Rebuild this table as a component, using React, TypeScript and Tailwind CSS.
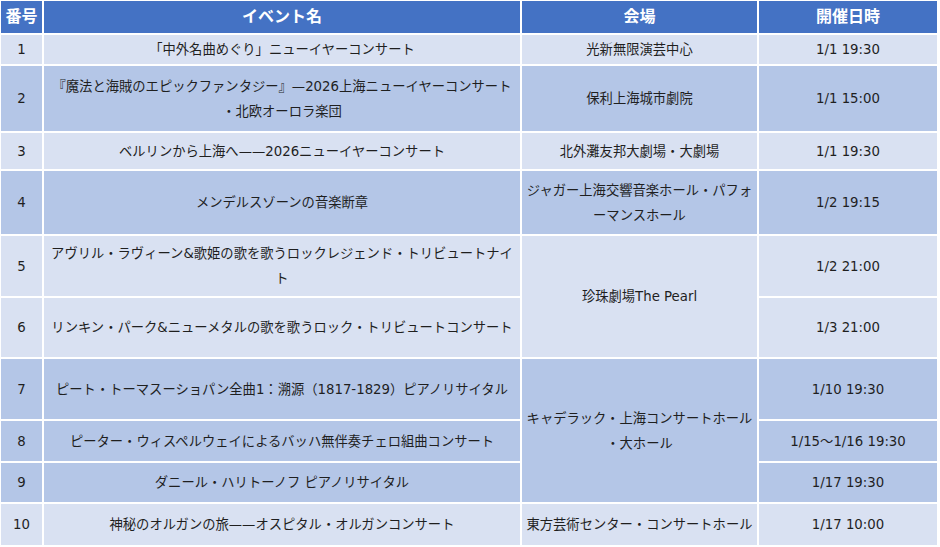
import React from "react";

const L = "bg-[#D9E1F2]";
const D = "bg-[#B4C6E7]";

type Cell = { text: React.ReactNode; bg: string; span?: number };

const cellBase =
  "flex items-center justify-center text-center text-[13.3px] leading-[25px] text-[#1f1f1f] whitespace-nowrap";

function C({ c }: { c: Cell }) {
  const spanCls = c.span === 2 ? "row-span-2" : c.span === 3 ? "row-span-3" : "";
  return <div className={`${cellBase} ${c.bg} ${spanCls}`}>{c.text}</div>;
}

export default function App() {
  const rows: Cell[][] = [
    [
      { text: "1", bg: L },
      { text: "「中外名曲めぐり」ニューイヤーコンサート", bg: L },
      { text: "光新無限演芸中心", bg: L },
      { text: "1/1 19:30", bg: L },
    ],
    [
      { text: "2", bg: D },
      {
        text: (
          <span>
            『魔法と海賊のエピックファンタジー』—2026上海ニューイヤーコンサート
            <br />・北欧オーロラ楽団
          </span>
        ),
        bg: D,
      },
      { text: "保利上海城市劇院", bg: D },
      { text: "1/1 15:00", bg: D },
    ],
    [
      { text: "3", bg: L },
      { text: "ベルリンから上海へ——2026ニューイヤーコンサート", bg: L },
      { text: "北外灘友邦大劇場・大劇場", bg: L },
      { text: "1/1 19:30", bg: L },
    ],
    [
      { text: "4", bg: D },
      { text: "メンデルスゾーンの音楽断章", bg: D },
      {
        text: (
          <span>
            ジャガー上海交響音楽ホール・パフォ
            <br />ーマンスホール
          </span>
        ),
        bg: D,
      },
      { text: "1/2 19:15", bg: D },
    ],
    [
      { text: "5", bg: L },
      {
        text: (
          <span>
            アヴリル・ラヴィーン&amp;歌姫の歌を歌うロックレジェンド・トリビュートナイ
            <br />ト
          </span>
        ),
        bg: L,
      },
      { text: "珍珠劇場The Pearl", bg: L, span: 2 },
      { text: "1/2 21:00", bg: L },
    ],
    [
      { text: "6", bg: L },
      { text: "リンキン・パーク&ニューメタルの歌を歌うロック・トリビュートコンサート", bg: L },
      { text: "1/3 21:00", bg: L },
    ],
    [
      { text: "7", bg: D },
      { text: "ピート・トーマスーショパン全曲1：溯源（1817-1829）ピアノリサイタル", bg: D },
      {
        text: (
          <span>
            キャデラック・上海コンサートホール
            <br />・大ホール
          </span>
        ),
        bg: D,
        span: 3,
      },
      { text: "1/10 19:30", bg: D },
    ],
    [
      { text: "8", bg: D },
      { text: "ピーター・ウィスペルウェイによるバッハ無伴奏チェロ組曲コンサート", bg: D },
      { text: "1/15～1/16 19:30", bg: D },
    ],
    [
      { text: "9", bg: D },
      { text: "ダニール・ハリトーノフ ピアノリサイタル", bg: D },
      { text: "1/17 19:30", bg: D },
    ],
    [
      { text: "10", bg: L },
      { text: "神秘のオルガンの旅——オスピタル・オルガンコンサート", bg: L },
      { text: "東方芸術センター・コンサートホール", bg: L },
      { text: "1/17 10:00", bg: L },
    ],
  ];

  const head = "flex items-center justify-center bg-[#4472C4] text-white font-bold text-[16px]";

  return (
    <div
      className="w-[940px] h-[547px] bg-white pt-px pl-px"
      style={{ fontFamily: '"DejaVu Sans", "Noto Sans CJK JP", sans-serif' }}
    >
      <div className="grid grid-cols-[41px_476px_235px_178px] grid-rows-[32px_29px_65px_36px_63px_60px_59px_60px_40px_39px_41px] gap-[2px]">
        <div className={head}>番号</div>
        <div className={head}>イベント名</div>
        <div className={head}>会場</div>
        <div className={head}>開催日時</div>
        {rows.flat().map((c, i) => (
          <C key={i} c={c} />
        ))}
      </div>
    </div>
  );
}
